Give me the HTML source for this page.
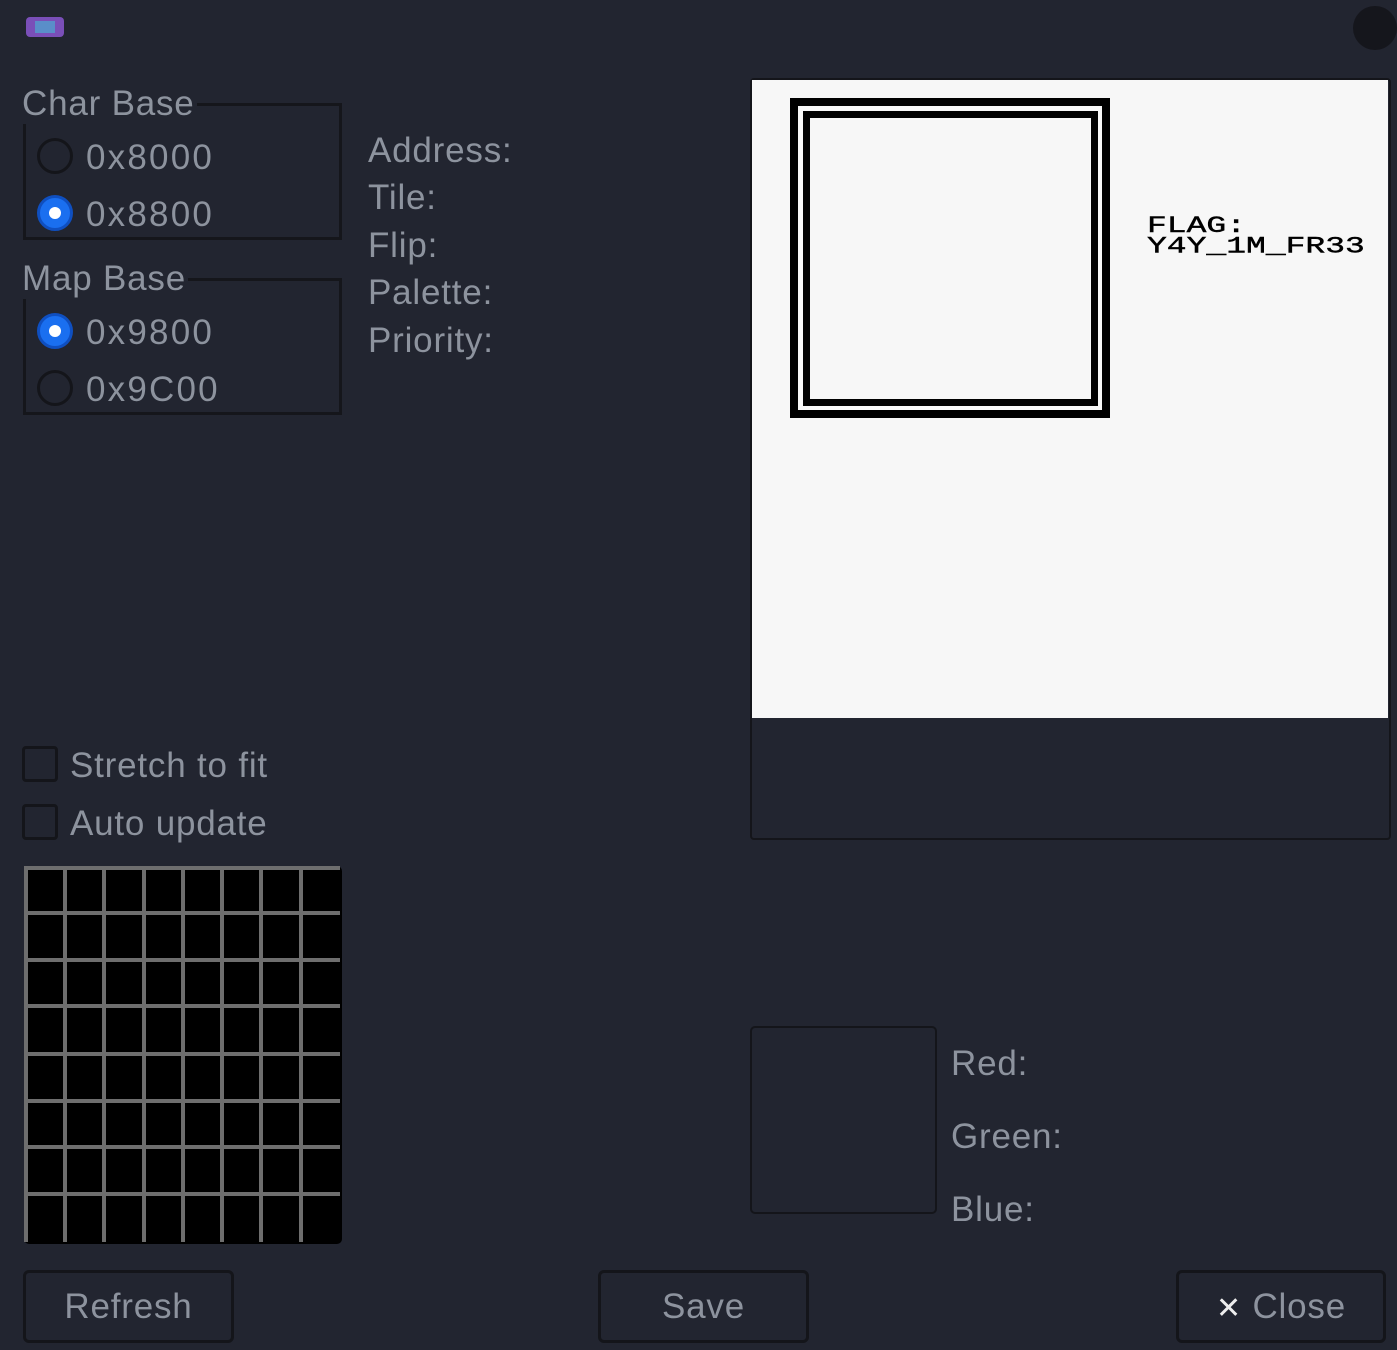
<!DOCTYPE html>
<html><head><style>
body{margin:0;width:1397px;height:1350px;background:#222530;font-family:"Liberation Sans","DejaVu Sans",sans-serif;color:#8d939e;position:relative;overflow:hidden}
.a{position:absolute}
.t{position:absolute;font-size:35px;line-height:40px;white-space:nowrap;letter-spacing:0.8px}
.r{letter-spacing:2.2px}
.frame{position:absolute;border:3px solid #15161b}
.radio{position:absolute;width:36px;height:36px;border-radius:50%;box-sizing:border-box;border:3px solid #14151a}
.radio.on{background:#1a6ff0;border:3px solid #0f4fc0}
.radio.on:after{content:"";position:absolute;left:9px;top:9px;width:12px;height:12px;border-radius:50%;background:#fff}
.cb{position:absolute;width:36px;height:36px;border:3px solid #14151a;border-radius:4px;box-sizing:border-box}
.btn{position:absolute;height:73px;border:3px solid #14151a;border-radius:6px;box-sizing:border-box;text-align:center;font-size:35px;line-height:67px;letter-spacing:0.8px}
</style></head><body>
<div class="a" style="left:26px;top:17px;width:38px;height:20px;background:#7a4fb8;border-radius:4px"></div>
<div class="a" style="left:35px;top:21px;width:20px;height:12px;background:#5a8ec9"></div>
<div class="a" style="left:1353px;top:6px;width:44px;height:44px;border-radius:50%;background:#15161c"></div>

<div class="frame" style="left:23px;top:103px;width:313px;height:131px"></div>
<div class="t" style="left:22px;top:84px;background:#222530;padding-right:2px">Char Base</div>
<div class="radio" style="left:37px;top:138px"></div>
<div class="t r" style="left:86px;top:138px">0x8000</div>
<div class="radio on" style="left:37px;top:195px"></div>
<div class="t r" style="left:86px;top:195px">0x8800</div>

<div class="frame" style="left:23px;top:278px;width:313px;height:131px"></div>
<div class="t" style="left:22px;top:259px;background:#222530;padding-right:2px">Map Base</div>
<div class="radio on" style="left:37px;top:313px"></div>
<div class="t r" style="left:86px;top:313px">0x9800</div>
<div class="radio" style="left:37px;top:370px"></div>
<div class="t r" style="left:86px;top:370px">0x9C00</div>

<div class="t" style="left:368px;top:131px">Address:</div>
<div class="t" style="left:368px;top:178px">Tile:</div>
<div class="t" style="left:368px;top:226px">Flip:</div>
<div class="t" style="left:368px;top:273px">Palette:</div>
<div class="t" style="left:368px;top:321px">Priority:</div>

<div class="cb" style="left:22px;top:746px"></div>
<div class="t" style="left:70px;top:746px">Stretch to fit</div>
<div class="cb" style="left:22px;top:804px"></div>
<div class="t" style="left:70px;top:804px">Auto update</div>

<svg class="a" style="left:24px;top:866px" width="318" height="378">
<rect x="0" y="0" width="318" height="378" rx="5" fill="#000"/>
<g stroke="#6e6e6e" stroke-width="4">
<line x1="2" y1="0" x2="2" y2="376"/><line x1="41" y1="0" x2="41" y2="376"/><line x1="80" y1="0" x2="80" y2="376"/><line x1="120" y1="0" x2="120" y2="376"/><line x1="159" y1="0" x2="159" y2="376"/><line x1="198" y1="0" x2="198" y2="376"/><line x1="237" y1="0" x2="237" y2="376"/><line x1="277" y1="0" x2="277" y2="376"/>
<line x1="0" y1="2" x2="316" y2="2"/><line x1="0" y1="47" x2="316" y2="47"/><line x1="0" y1="94" x2="316" y2="94"/><line x1="0" y1="140" x2="316" y2="140"/><line x1="0" y1="188" x2="316" y2="188"/><line x1="0" y1="235" x2="316" y2="235"/><line x1="0" y1="281" x2="316" y2="281"/><line x1="0" y1="328" x2="316" y2="328"/>
</g></svg>

<div class="a" style="left:750px;top:78px;width:637px;height:758px;border:2px solid #14151a;border-radius:4px"></div>
<div class="a" style="left:752px;top:80px;width:636px;height:638px;background:#f7f7f7"></div>
<div class="a" style="left:790px;top:98px;width:304px;height:304px;border:8px solid #000"></div>
<div class="a" style="left:803px;top:111px;width:281px;height:281px;border:7px solid #000"></div>
<div class="a" style="left:1147px;top:216px;font-family:'Liberation Mono',monospace;font-size:33px;line-height:29px;color:#000;transform:scaleY(0.7);transform-origin:top left;white-space:nowrap;-webkit-text-stroke:0.6px #000">FLAG:<br>Y4Y_1M_FR33</div>

<div class="a" style="left:750px;top:1026px;width:183px;height:184px;border:2px solid #14151a;border-radius:5px"></div>
<div class="t" style="left:951px;top:1044px">Red:</div>
<div class="t" style="left:951px;top:1117px">Green:</div>
<div class="t" style="left:951px;top:1190px">Blue:</div>

<div class="btn" style="left:23px;top:1270px;width:211px">Refresh</div>
<div class="btn" style="left:598px;top:1270px;width:211px">Save</div>
<div class="btn" style="left:1176px;top:1270px;width:210px"><span style="color:#eee;font-size:30px;font-weight:bold">✕</span> Close</div>
</body></html>
